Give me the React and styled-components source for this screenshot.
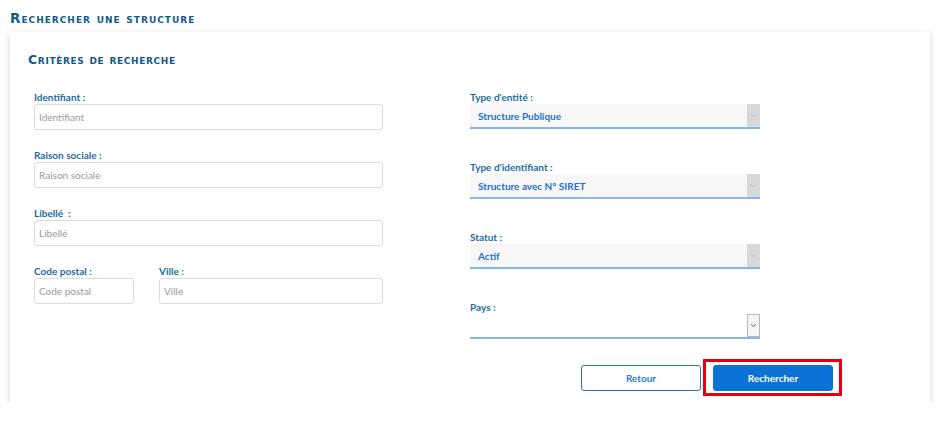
import React from 'react';
import styled, { createGlobalStyle } from 'styled-components';

const GlobalStyle = createGlobalStyle`
  body {
    margin: 0;
    background: #ffffff;
    font-family: Lato, "Open Sans", sans-serif;
  }
`;

const Page = styled.div`
  padding: 10px 15px 0 10px;
`;

const PageTitle = styled.h1`
  margin: 0 0 6px 0;
  font-family: "DejaVu Sans", Verdana, sans-serif;
  font-size: 13.5px;
  line-height: 16px;
  font-weight: 700;
  font-variant: small-caps;
  letter-spacing: 1px;
  color: #0f5c8c;
`;

const Card = styled.div`
  background: #fff;
  box-shadow: 0 2px 6px rgba(0, 0, 0, 0.18);
  padding: 20px 18px 7px 18px;
`;

const SectionTitle = styled.h2`
  margin: 0 0 24px 0;
  font-family: "DejaVu Sans", Verdana, sans-serif;
  font-size: 12.5px;
  line-height: 15px;
  font-weight: 700;
  font-variant: small-caps;
  letter-spacing: 0.65px;
  color: #13588a;
`;

const Grid = styled.div`
  display: grid;
  grid-template-columns: 349px 290px;
  column-gap: 87px;
  align-items: start;
  margin-left: 6px;
`;

const Column = styled.div`
  display: flex;
  flex-direction: column;
  gap: ${(p) => p.gap}px;
`;

const Row = styled.div`
  display: flex;
  gap: 25px;
`;

const Field = styled.div`
  display: flex;
  flex-direction: column;
  width: ${(p) => (p.w ? `${p.w}px` : '100%')};
`;

const Label = styled.label`
  font-size: 10px;
  line-height: 13px;
  font-weight: 700;
  color: #1b6b9e;
  white-space: pre;
`;

const Input = styled.input`
  box-sizing: border-box;
  width: 100%;
  height: 26px;
  border: 1px solid #dcdcdc;
  border-radius: 3px;
  padding: 0 4px;
  font-family: Lato, "Open Sans", sans-serif;
  font-size: 10px;
  color: #444;
  outline: none;
  &::placeholder {
    color: #9a9a9a;
  }
`;

const Select = styled.div`
  box-sizing: border-box;
  height: 25px;
  display: flex;
  align-items: center;
  justify-content: space-between;
  background: ${(p) => (p.empty ? '#ffffff' : '#f7f7f7')};
  border-bottom: 2px solid #82b9ea;
  padding-left: 8px;
  font-size: 10px;
  font-weight: 700;
  color: #1f6fcf;
`;

const Arrow = styled.div`
  align-self: stretch;
  width: 13px;
  display: flex;
  align-items: center;
  justify-content: center;
  box-sizing: border-box;
  background: ${(p) => (p.empty ? '#f4f4f4' : '#d8d8d8')};
  border: ${(p) => (p.empty ? '1px solid #b8b8b8' : 'none')};
  color: ${(p) => (p.empty ? '#555' : '#bdbdbd')};
`;

const Footer = styled.div`
  display: flex;
  justify-content: flex-end;
  align-items: center;
  gap: 2px;
  margin-top: 20px;
  margin-right: 70px;
`;

const Button = styled.button`
  box-sizing: border-box;
  width: 120px;
  height: 26px;
  border-radius: 3px;
  font-family: Lato, "Open Sans", sans-serif;
  font-size: 10px;
  font-weight: 700;
  cursor: pointer;
  border: 1.5px solid ${(p) => (p.primary ? '#0b72d6' : '#2a74b8')};
  background: ${(p) => (p.primary ? '#0b72d6' : '#ffffff')};
  color: ${(p) => (p.primary ? '#ffffff' : '#2f7cc6')};
`;

const Highlight = styled.span`
  display: flex;
  border: 3px solid #e3000f;
  padding: 3px 6px 2px 7px;
`;

const Chevron = () => (
  <svg width="7" height="5" viewBox="0 0 7 5" fill="none">
    <path d="M1 1.2 L3.5 3.7 L6 1.2" stroke="currentColor" strokeWidth="0.9" />
  </svg>
);

const SelectBox = ({ value }) => (
  <Select empty={!value}>
    <span>{value}</span>
    <Arrow empty={!value}>
      <Chevron />
    </Arrow>
  </Select>
);

export default function App() {
  return (
    <>
      <GlobalStyle />
      <Page>
        <PageTitle>Rechercher une structure</PageTitle>
        <Card>
          <SectionTitle>Critères de recherche</SectionTitle>
          <Grid>
            <Column gap={19}>
              <Field>
                <Label>Identifiant :</Label>
                <Input placeholder="Identifiant" />
              </Field>
              <Field>
                <Label>Raison sociale :</Label>
                <Input placeholder="Raison sociale" />
              </Field>
              <Field>
                <Label>Libellé  :</Label>
                <Input placeholder="Libellé" />
              </Field>
              <Row>
                <Field w={100}>
                  <Label>Code postal :</Label>
                  <Input placeholder="Code postal" />
                </Field>
                <Field w={224}>
                  <Label>Ville :</Label>
                  <Input placeholder="Ville" />
                </Field>
              </Row>
            </Column>
            <Column gap={32}>
              <Field>
                <Label>Type d'entité :</Label>
                <SelectBox value="Structure Publique" />
              </Field>
              <Field>
                <Label>Type d'identifiant :</Label>
                <SelectBox value="Structure avec N° SIRET" />
              </Field>
              <Field>
                <Label>Statut :</Label>
                <SelectBox value="Actif" />
              </Field>
              <Field>
                <Label>Pays :</Label>
                <SelectBox value="" />
              </Field>
            </Column>
          </Grid>
          <Footer>
            <Button>Retour</Button>
            <Highlight>
              <Button primary>Rechercher</Button>
            </Highlight>
          </Footer>
        </Card>
      </Page>
    </>
  );
}
